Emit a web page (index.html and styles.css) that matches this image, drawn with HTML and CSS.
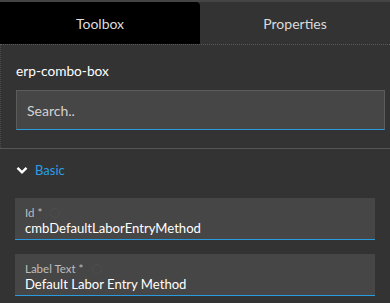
FILE: index.html
```html
<!DOCTYPE html>
<html lang="en">
<head>
    <meta charset="UTF-8">
    <meta name="viewport" content="width=device-width, initial-scale=1.0">
    <title>Toolbox</title>
    <link rel="stylesheet" href="styles.css">
</head>
<body>
    <div class="panel">
        <div class="tabs">
            <div class="tab active">Toolbox</div>
            <div class="tab">Properties</div>
        </div>

        <div class="content">
            <div class="component-name">erp-combo-box</div>
            <div class="search">
                <input type="text" placeholder="Search..">
            </div>
        </div>

        <div class="section">
            <div class="section-header">
                <svg class="chevron" width="12" height="9" viewBox="0 0 12 9">
                    <path d="M1.5 1.8 L6 6.3 L10.5 1.8" fill="none" stroke="#fff" stroke-width="2.4"/>
                </svg>
                <span>Basic</span>
            </div>

            <div class="field">
                <div class="field-label">Id * <span class="help"></span></div>
                <div class="field-value">cmbDefaultLaborEntryMethod</div>
            </div>

            <div class="field">
                <div class="field-label">Label Text * <span class="help"></span></div>
                <div class="field-value">Default Labor Entry Method</div>
            </div>
        </div>
    </div>
</body>
</html>
```

FILE: styles.css
```css
body {
    margin: 0;
    font-family: Lato, "Open Sans", sans-serif;
    background-color: #333333;
    color: #fff;
}
.panel {
    border-top: 2px solid #444;
    height: 301px;
    overflow: hidden;
}
.tabs {
    display: flex;
    height: 42px;
    border-bottom: 1px dotted #5a5a5a;
}
.tab {
    flex: 1;
    display: flex;
    align-items: center;
    justify-content: center;
    font-size: 14px;
    color: #dadada;
}
.tab.active {
    flex: 0 0 200px;
    background-color: #000;
    border-top-right-radius: 4px;
    color: #dddddd;
}
.content {
    padding: 17px 5px 18px 15px;
    border-left: 1px dotted #4a4a4a;
}
.component-name {
    font-size: 13.7px;
    margin-bottom: 11px;
}
.search {
    background-color: #464646;
    border: 1px solid #5c5c5c;
    border-bottom: 1px solid #2b9be0;
    height: 38px;
    display: flex;
    align-items: center;
}
.search input {
    background: transparent;
    border: none;
    outline: none;
    padding: 0 10px;
    font-family: inherit;
    font-size: 14px;
    color: #ddd;
    width: 100%;
}
.search input::placeholder {
    color: #d2d2d2;
}
.section {
    border-top: 1px solid #555;
    padding: 0 15px 0 15px;
}
.section-header {
    display: flex;
    align-items: center;
    gap: 7px;
    height: 42px;
    padding-left: 1px;
    font-size: 13px;
    color: #2a9fe6;
    margin-bottom: 7px;
}
.field {
    background-color: #464646;
    border-bottom: 1px solid #2b9be0;
    padding: 8px 10px 3px 10px;
    margin-bottom: 14px;
}
.field-label {
    font-size: 11.5px;
    color: #bdbdbd;
    display: flex;
    align-items: center;
    gap: 8px;
}
.help {
    width: 8px;
    height: 8px;
    border: 1px solid #4e4e4e;
    border-radius: 50%;
}
.field-value {
    font-size: 13.1px;
    color: #fff;
    margin-top: 1px;
}
```
